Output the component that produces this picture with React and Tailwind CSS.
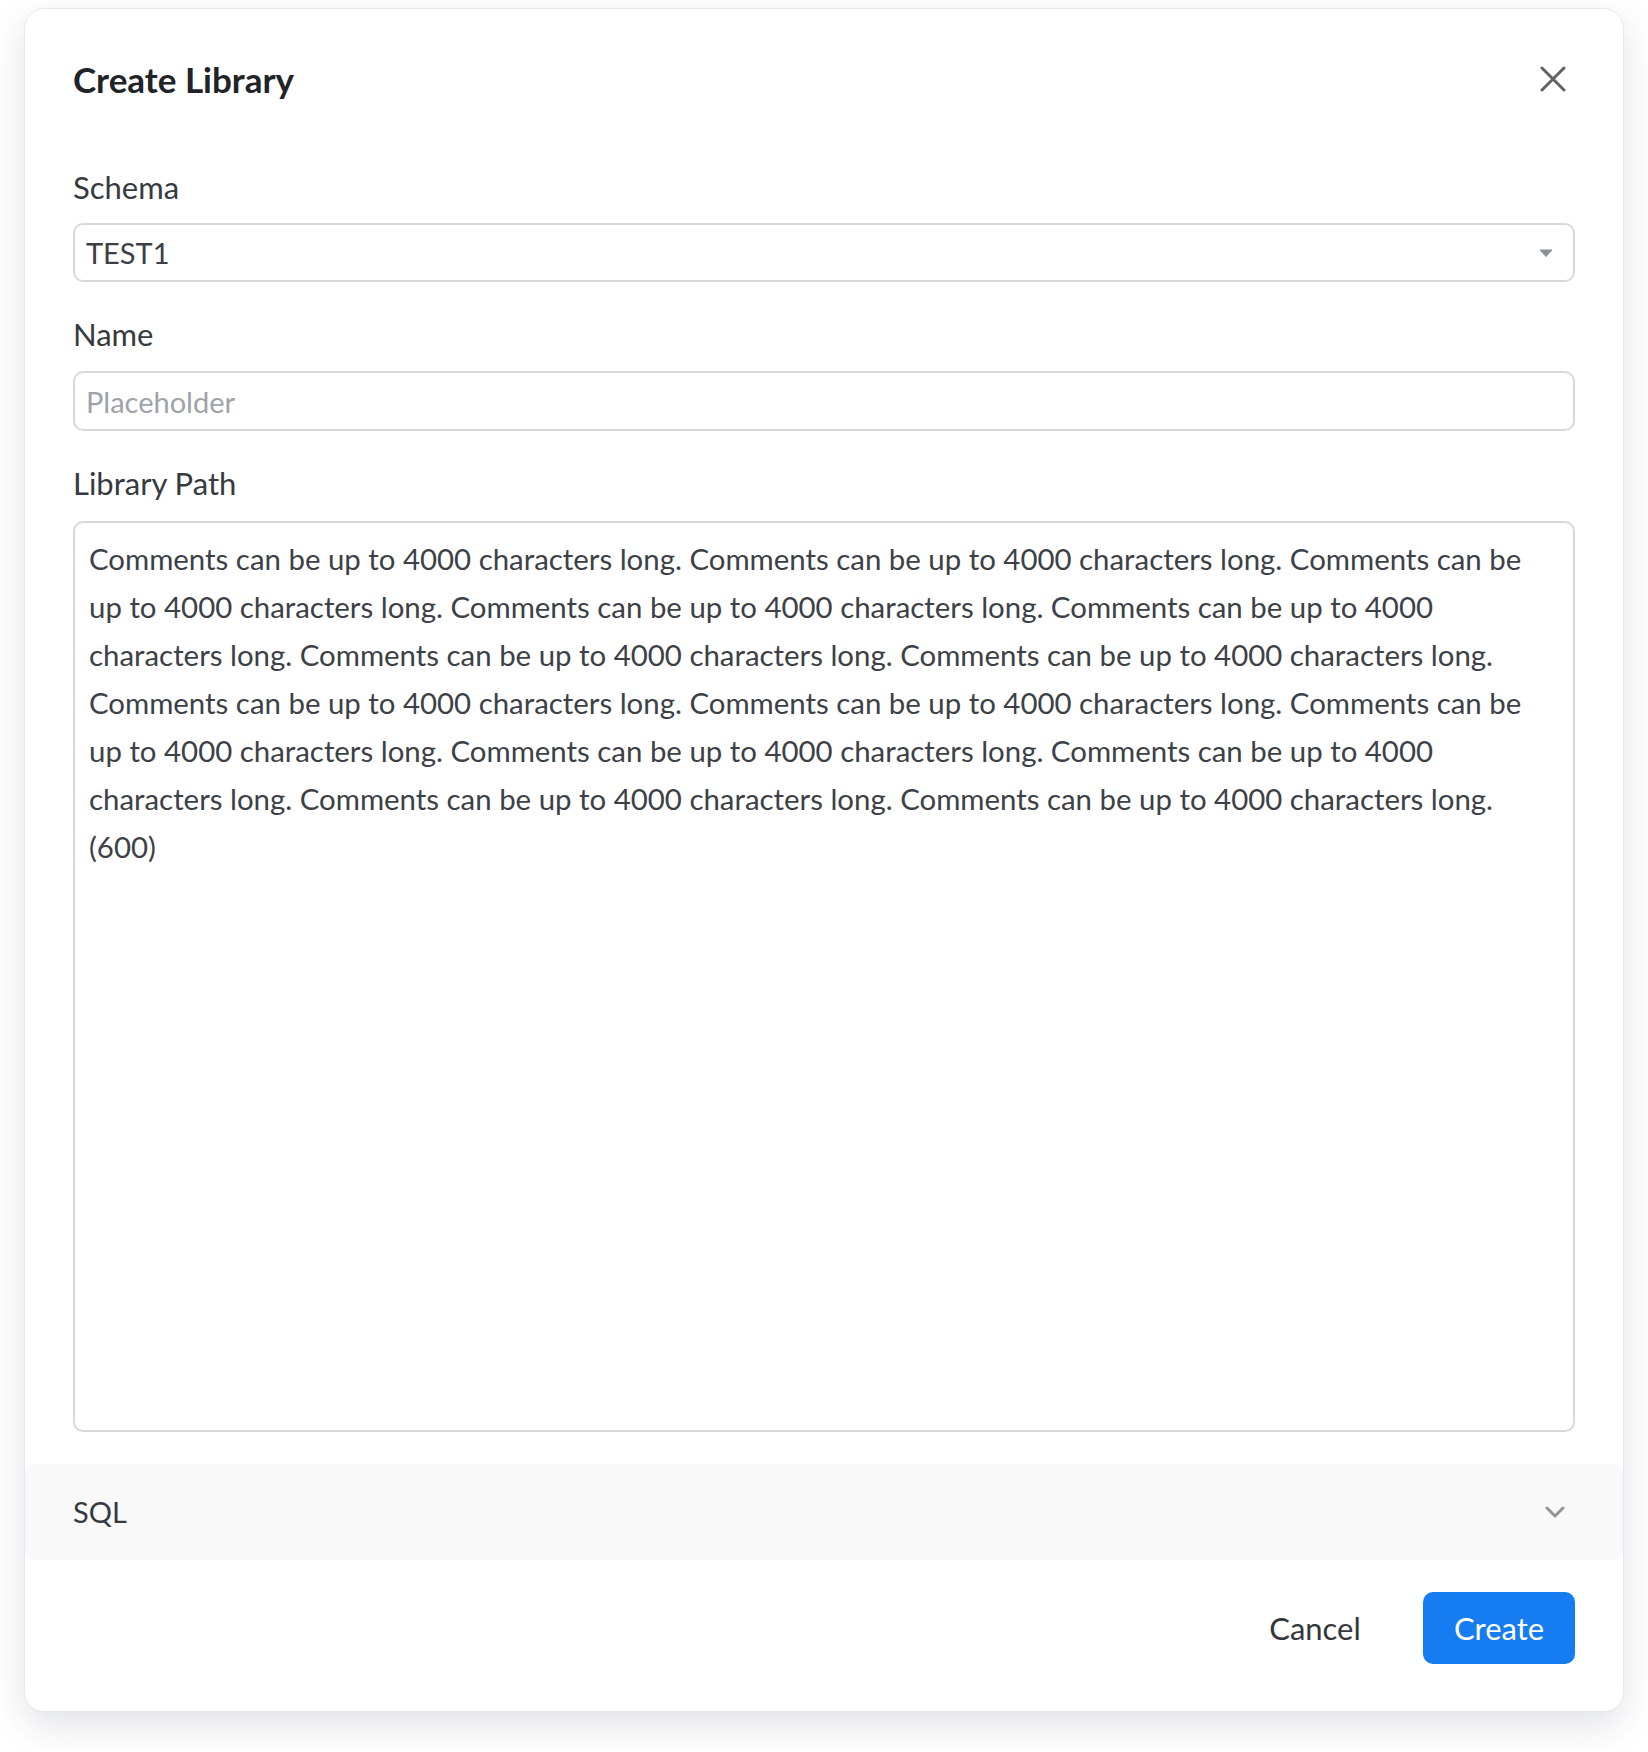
import { useState } from "react";

const LINES = [
  "Comments can be up to 4000 characters long. Comments can be up to 4000 characters long. Comments can be",
  "up to 4000 characters long. Comments can be up to 4000 characters long. Comments can be up to 4000",
  "characters long. Comments can be up to 4000 characters long. Comments can be up to 4000 characters long.",
  "Comments can be up to 4000 characters long. Comments can be up to 4000 characters long. Comments can be",
  "up to 4000 characters long. Comments can be up to 4000 characters long. Comments can be up to 4000",
  "characters long. Comments can be up to 4000 characters long. Comments can be up to 4000 characters long.",
  "(600)",
];

function Label({ children, className }) {
  return (
    <div className={`${className} leading-[40px] text-[31px] text-[#363a3f]`}>
      {children}
    </div>
  );
}

export default function App() {
  const [name, setName] = useState("");

  return (
    <div className="min-h-screen bg-white pt-2 px-6" style={{ fontFamily: "Lato, 'Noto Sans', sans-serif" }}>
      <div className="w-[1600px] bg-white rounded-[20px] border border-[#e7e8eb] shadow-[0_14px_36px_rgba(30,41,59,0.13)]">
        <div className="px-12 pt-[46px]">
          {/* header */}
          <div className="h-12 flex items-center justify-between">
            <h2 className="text-[35px] font-bold text-[#202327]">Create Library</h2>
            <button className="w-11 h-11 flex items-center justify-center text-[#5f6368]">
              <svg width="26" height="26" viewBox="0 0 26 26">
                <path d="M2 2L24 24M24 2L2 24" stroke="currentColor" strokeWidth="3" strokeLinecap="round" />
              </svg>
            </button>
          </div>

          <Label className="mt-16 mb-4">Schema</Label>
          <div className="h-[59px] border-2 border-[#d6d8dc] rounded-[10px] flex items-center justify-between pl-[11px] pr-[20px]">
            <span className="text-[29px] text-[#3c4046]">TEST1</span>
            <svg width="14" height="8" viewBox="0 0 14 8" className="text-[#8c9096]">
              <path d="M1 1h12L7 7.5z" fill="currentColor" stroke="currentColor" strokeWidth="1" strokeLinejoin="round" />
            </svg>
          </div>

          <Label className="mt-8 mb-[17px]">Name</Label>
          <input
            className="w-full h-[60px] border-2 border-[#d6d8dc] rounded-[10px] pl-[11px] text-[29px] text-[#3c4046] placeholder:text-[#9ea3a9] outline-none"
            placeholder="Placeholder"
            value={name}
            onChange={(e) => setName(e.target.value)}
          />

          <Label className="mt-8 mb-[18px]">Library Path</Label>
          <div className="h-[911px] border-2 border-[#d6d8dc] rounded-[10px] px-[14px] pt-3 text-[29.4px] leading-[48px] text-[#3c4147]">
            {LINES.map((l, i) => (
              <div key={i} className="whitespace-nowrap">{l}</div>
            ))}
          </div>
        </div>

        {/* SQL accordion */}
        <div className="mt-8 h-24 bg-[#f9f9fa] rounded-lg pl-12 pr-12 flex items-center justify-between">
          <span className="text-[29px] text-[#363a3f]">SQL</span>
          <div className="w-10 h-10 flex items-center justify-center text-[#90959c]">
            <svg width="20" height="12" viewBox="0 0 20 12">
              <path d="M2 2l8 8 8-8" fill="none" stroke="currentColor" strokeWidth="3" strokeLinecap="round" strokeLinejoin="round" />
            </svg>
          </div>
        </div>

        {/* footer */}
        <div className="px-12 pt-8 pb-[47px] flex justify-end gap-8">
          <button className="w-[152px] h-[72px] rounded-[10px] text-[31px] text-[#33373c]">Cancel</button>
          <button className="w-[152px] h-[72px] rounded-[10px] bg-[#167cf1] text-[31px] text-white">Create</button>
        </div>
      </div>
    </div>
  );
}
